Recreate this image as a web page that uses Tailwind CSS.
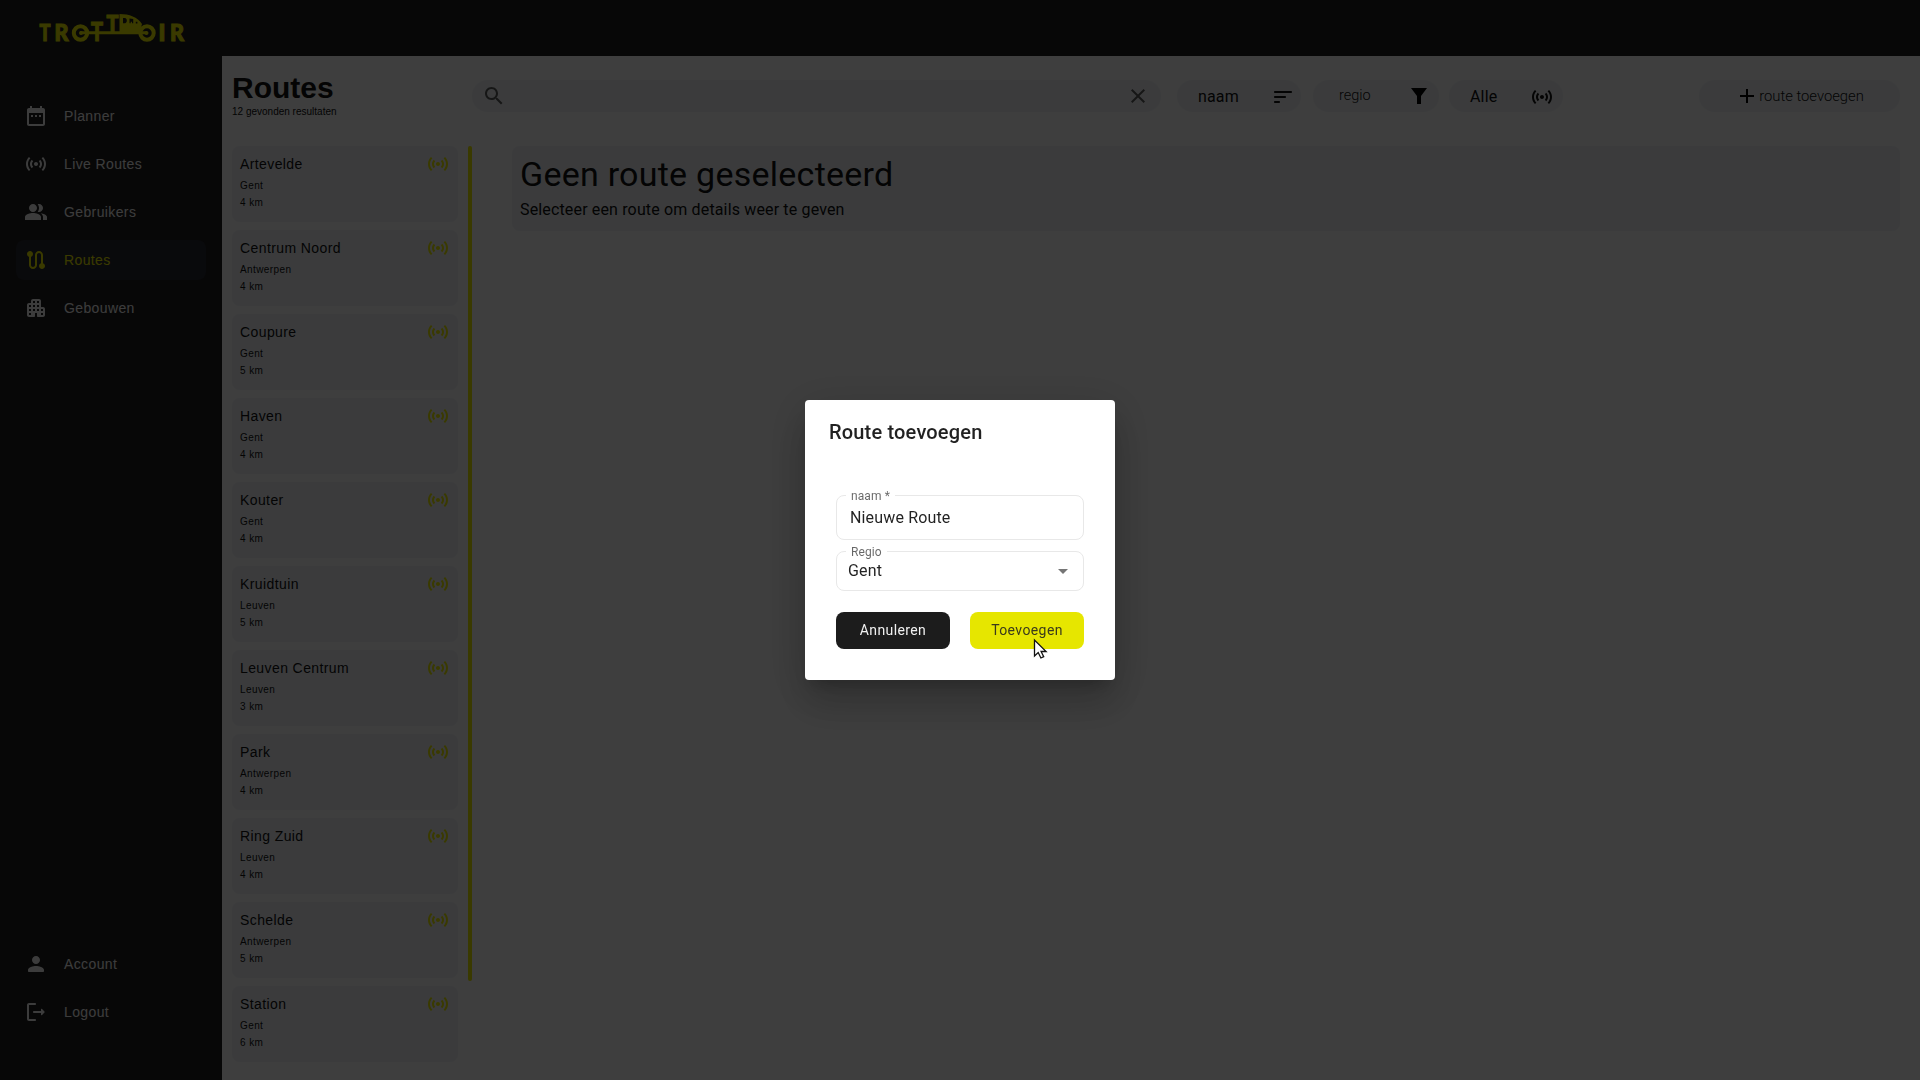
<!DOCTYPE html>
<html lang="nl">
<head>
<meta charset="utf-8">
<title>Trottoir - Routes</title>
<script src="https://cdn.jsdelivr.net/npm/@tailwindcss/browser@4"></script>
</head>
<body class="h-screen overflow-hidden bg-[#f5f5f5] font-['Roboto',sans-serif] text-[#101010]">
<svg class="hidden">
  <symbol id="live" viewBox="0 0 24 24"><path d="M7.76 16.24C6.67 15.16 6 13.66 6 12s.67-3.16 1.76-4.24l1.42 1.42C8.45 9.9 8 10.9 8 12c0 1.1.45 2.1 1.17 2.83l-1.41 1.41zm8.48 0C17.33 15.16 18 13.66 18 12s-.67-3.16-1.76-4.24l-1.42 1.42C15.55 9.9 16 10.9 16 12c0 1.1-.45 2.1-1.17 2.83l1.41 1.41zM12 10c-1.1 0-2 .9-2 2s.9 2 2 2 2-.9 2-2-.9-2-2-2zm8 2c0 2.21-.9 4.21-2.35 5.65l1.42 1.42C20.88 17.26 22 14.76 22 12s-1.12-5.26-2.93-7.07l-1.42 1.42C19.1 7.79 20 9.79 20 12zM6.35 6.35 4.93 4.93C3.12 6.74 2 9.24 2 12s1.12 5.26 2.93 7.07l1.42-1.42C4.9 16.21 4 14.21 4 12s.9-4.21 2.35-5.65z"/></symbol>
</svg>

<div class="flex h-screen flex-col">
  <header class="flex h-14 shrink-0 items-start bg-[#1c1c1c] pl-9">
    <svg class="h-14 w-40 fill-[#e6e600]" viewBox="36 0 160 56" font-family="Lato, sans-serif" font-weight="900">
      <g stroke="#e6e600" stroke-width="1.1">
        <text x="39.500" y="41" font-size="23" textLength="11" lengthAdjust="spacingAndGlyphs">T</text>
        <text x="54.500" y="41" font-size="23" textLength="14" lengthAdjust="spacingAndGlyphs">R</text>
        <text x="91" y="41" font-size="27" textLength="12" lengthAdjust="spacingAndGlyphs">T</text>
        <text x="106.500" y="32.500" font-size="24" textLength="12" lengthAdjust="spacingAndGlyphs">T</text>
        <text x="158.500" y="41" font-size="23">I</text>
        <text x="170" y="41" font-size="23" textLength="14" lengthAdjust="spacingAndGlyphs">R</text>
      </g>
      <circle cx="80.500" cy="33" r="6.700" fill="none" stroke="#e6e600" stroke-width="4"/>
      <circle cx="81" cy="33" r="2"/>
      <path d="M80 31.300h67v3H80z"/>
      <path fill-rule="evenodd" d="M119.500 14c10 0 18 3 22.500 10l-3 10h-19.500zM123 18v5.300h2.200c2.200-1 2.200-4.300 0-5.300zM129.500 18.500v4.800h1.200v-1.500h1.300v1.500h1.200v-4.300zM135.800 21.800v1.600h1.600v-1.600z"/>
      <circle cx="147" cy="33" r="6.700" fill="none" stroke="#e6e600" stroke-width="4"/>
      <circle cx="146.500" cy="33" r="2"/>
    </svg>
  </header>

  <div class="flex min-h-0 flex-1">
    <nav class="flex w-[222px] shrink-0 flex-col gap-2 bg-[#1c1c1c] px-4 pt-10 pb-12 font-['Liberation_Sans',sans-serif] text-sm tracking-[.38px] text-[#f0f0f0]">
      <a class="flex h-10 items-center gap-4 rounded-lg px-2"><svg class="size-6 fill-current" viewBox="0 0 24 24"><path d="M9 11H7v2h2v-2zm4 0h-2v2h2v-2zm4 0h-2v2h2v-2zm2-7h-1V2h-2v2H8V2H6v2H5c-1.110 0-1.990.9-1.990 2L3 20c0 1.100.89 2 2 2h14c1.100 0 2-.9 2-2V6c0-1.100-.9-2-2-2zm0 16H5V9h14v11z"/></svg>Planner</a>
      <a class="flex h-10 items-center gap-4 rounded-lg px-2"><svg class="size-6 fill-current"><use href="#live"/></svg>Live Routes</a>
      <a class="flex h-10 items-center gap-4 rounded-lg px-2"><svg class="size-6 fill-current" viewBox="0 0 24 24"><path d="M16.670 13.130C18.040 14.060 19 15.320 19 17v3h4v-3c0-2.180-3.570-3.470-6.330-3.870zM15 12c2.210 0 4-1.790 4-4s-1.790-4-4-4c-.47 0-.91.1-1.330.24C14.500 5.270 15 6.580 15 8s-.5 2.730-1.330 3.760c.42.14.86.24 1.330.24zM9 12c2.210 0 4-1.790 4-4s-1.790-4-4-4-4 1.790-4 4 1.790 4 4 4zm0 1c-2.670 0-8 1.340-8 4v3h16v-3c0-2.660-5.330-4-8-4z"/></svg>Gebruikers</a>
      <a class="flex h-10 items-center gap-4 rounded-lg bg-[#262830] px-2 text-[#e6e600]"><svg class="size-6 fill-current" viewBox="0 0 24 24"><path d="M19 15.180V7c0-2.210-1.790-4-4-4s-4 1.790-4 4v10c0 1.100-.9 2-2 2s-2-.9-2-2V8.820C8.160 8.400 9 7.300 9 6c0-1.660-1.340-3-3-3S3 4.340 3 6c0 1.300.84 2.400 2 2.820V17c0 2.210 1.790 4 4 4s4-1.790 4-4V7c0-1.100.9-2 2-2s2 .9 2 2v8.180c-1.160.41-2 1.510-2 2.820 0 1.660 1.340 3 3 3s3-1.340 3-3c0-1.300-.84-2.400-2-2.820z"/></svg>Routes</a>
      <a class="flex h-10 items-center gap-4 rounded-lg px-2"><svg class="size-6 fill-current" viewBox="0 0 24 24"><path d="M17 11V5c0-1.100-.9-2-2-2H9c-1.100 0-2 .9-2 2v2H5c-1.100 0-2 .9-2 2v10c0 1.100.9 2 2 2h5c.55 0 1-.45 1-1v-3h2v3c0 .55.45 1 1 1h5c1.100 0 2-.9 2-2v-6c0-1.100-.9-2-2-2h-2zM7 19H5v-2h2v2zm0-4H5v-2h2v2zm0-4H5V9h2v2zm4 4H9v-2h2v2zm0-4H9V9h2v2zm0-4H9V5h2v2zm4 8h-2v-2h2v2zm0-4h-2V9h2v2zm0-4h-2V5h2v2zm4 12h-2v-2h2v2zm0-4h-2v-2h2v2z"/></svg>Gebouwen</a>
      <a class="mt-auto flex h-10 items-center gap-4 rounded-lg px-2"><svg class="size-6 fill-current" viewBox="0 0 24 24"><path d="M12 12c2.210 0 4-1.790 4-4s-1.790-4-4-4-4 1.790-4 4 1.790 4 4 4zm0 2c-2.670 0-8 1.340-8 4v1c0 .55.45 1 1 1h14c.55 0 1-.45 1-1v-1c0-2.660-5.330-4-8-4z"/></svg>Account</a>
      <a class="flex h-10 items-center gap-4 rounded-lg px-2"><svg class="size-6 fill-current" viewBox="0 0 24 24"><path d="M5 5h6c.55 0 1-.45 1-1s-.45-1-1-1H5c-1.100 0-2 .9-2 2v14c0 1.100.9 2 2 2h6c.55 0 1-.45 1-1s-.45-1-1-1H5V5zm15.650 6.650-2.790-2.790c-.32-.32-.86-.1-.86.35V11h-7c-.55 0-1 .45-1 1s.45 1 1 1h7v1.790c0 .45.54.67.85.35l2.790-2.790c.2-.19.2-.51.010-.7z"/></svg>Logout</a>
    </nav>

    <main class="flex min-w-0 flex-1 flex-col pl-2.5 pr-5 pt-4">
      <div class="flex h-[74px] shrink-0 items-start">
        <div class="w-[240px] shrink-0 font-['Liberation_Sans',sans-serif]">
          <h1 class="text-[30px]/[32px] font-bold">Routes</h1>
          <p class="text-[10px]/[15px]">12 gevonden resultaten</p>
        </div>
        <div class="mt-2 flex h-8 flex-1 items-center text-base">
          <div class="flex h-8 w-[689px] items-center justify-between rounded-full bg-[#e9ecf0] pl-2.5 pr-[11px] text-[#5a5a5a]">
            <svg class="size-6 fill-current" viewBox="0 0 24 24"><path d="M15.500 14h-.79l-.28-.27C15.410 12.590 16 11.110 16 9.500 16 5.910 13.090 3 9.500 3S3 5.910 3 9.500 5.910 16 9.500 16c1.610 0 3.090-.59 4.230-1.570l.27.28v.79l5 4.990L20.490 19l-4.990-5zm-6 0C7.010 14 5 11.990 5 9.500S7.010 5 9.500 5 14 7.010 14 9.500 11.990 14 9.500 14z"/></svg>
            <svg class="size-6 fill-current" viewBox="0 0 24 24"><path d="M19 6.410 17.590 5 12 10.590 6.410 5 5 6.410 10.590 12 5 17.590 6.410 19 12 13.410 17.590 19 19 17.590 13.410 12z"/></svg>
          </div>
          <div class="ml-4 flex h-8 w-[124px] items-center justify-between rounded-full bg-[#e9ecf0] pl-[21px] pr-1.5 pt-px tracking-[.15px]">naam
            <svg class="size-6 fill-current" viewBox="0 0 24 24"><path d="M4 18h4c.55 0 1-.45 1-1s-.45-1-1-1H4c-.55 0-1 .45-1 1s.45 1 1 1zM3 7c0 .55.45 1 1 1h16c.55 0 1-.45 1-1s-.45-1-1-1H4c-.55 0-1 .45-1 1zm1 6h10c.55 0 1-.45 1-1s-.45-1-1-1H4c-.55 0-1 .45-1 1s.45 1 1 1z"/></svg>
          </div>
          <div class="ml-3 flex h-8 w-[126px] items-center justify-between rounded-full bg-[#e9ecf0] pl-[26px] pr-2 text-[14.5px] font-light">regio
            <svg class="size-6 fill-black" viewBox="0 0 24 24"><path d="M4 4h16l-6 8v8h-4v-8z"/></svg>
          </div>
          <div class="ml-2.5 flex h-8 w-[114px] items-center justify-between rounded-full bg-[#e9ecf0] pl-[21px] pr-[9px] pt-px tracking-[.15px]">Alle
            <svg class="size-6 fill-current"><use href="#live"/></svg>
          </div>
          <button class="ml-auto flex h-8 w-[201px] items-center justify-center rounded-full bg-[#e9ecf0] text-[14.8px] font-light"><svg class="size-6 fill-black" viewBox="0 0 24 24"><path d="M19 13h-6v6h-2v-6H5v-2h6V5h2v6h6v2z"/></svg>route toevoegen</button>
        </div>
      </div>

      <div class="flex min-h-0 flex-1">
        <section id="routes" class="flex w-[226px] shrink-0 flex-col gap-2 font-['Liberation_Sans',sans-serif]"></section>
        <div class="ml-2.5 h-[835px] w-1 shrink-0 rounded-full bg-[#e6e600]"></div>
        <section class="ml-10 h-[85px] flex-1 rounded-lg bg-[#e9ecf0] px-2 pt-[7px]">
          <h2 class="text-[34px]/[42px] tracking-[.25px]">Geen route geselecteerd</h2>
          <p class="mt-px text-base/7 tracking-[.15px]">Selecteer een route om details weer te geven</p>
        </section>
      </div>
    </main>
  </div>
</div>

<div class="fixed inset-0 flex items-center justify-center bg-black/75">
  <div role="dialog" class="relative h-[280px] w-[310px] rounded bg-white pt-4 shadow-[0_11px_15px_-7px_rgba(0,0,0,.2),0_24px_38px_3px_rgba(0,0,0,.14),0_9px_46px_8px_rgba(0,0,0,.12)]">
    <h2 class="px-6 text-xl/8 font-medium tracking-[.18px] text-black/87">Route toevoegen</h2>
    <div class="mt-[39px] flex flex-col px-[31px] text-base text-black/87">
      <fieldset class="-mt-px h-[54px] rounded-lg border border-[#e8e8e8] px-[9px]">
        <legend class="px-[5px] text-xs/[18px] tracking-[.1px] text-black/60"><span class="relative top-px">naam *</span></legend>
        <div class="px-1 pt-0.5 tracking-[.15px]">Nieuwe Route</div>
      </fieldset>
      <fieldset class="mt-0.5 h-[49px] rounded-lg border border-[#e8e8e8] px-[9px]">
        <legend class="px-[5px] text-xs/[18px] tracking-[.1px] text-black/60"><span class="relative top-px">Regio</span></legend>
        <div class="-mt-px flex items-center justify-between pl-0.5 tracking-[.15px]">Gent<svg class="-mr-px size-6 fill-black/54" viewBox="0 0 24 24"><path d="M7 10l5 5 5-5z"/></svg></div>
      </fieldset>
      <div class="mt-[21px] flex justify-between text-sm tracking-[.4px]">
        <button class="h-[37px] w-[114px] rounded-lg bg-[#1c1c1c] pb-0.5 text-[#f0f0f0]">Annuleren</button>
        <button class="h-[37px] w-[114px] rounded-lg bg-[#e6e600] pb-0.5 text-[#3a3a1c]">Toevoegen</button>
      </div>
    </div>
    <svg class="absolute left-[228px] top-[238px] h-[22px] w-[15px]" viewBox="0 0 15 22"><path d="M1.500 2v16l3.700-3.500 2.700 5.500 2.800-1.300-2.600-5.200h5z" fill="#fff" stroke="#111" stroke-width="1.300"/></svg>
  </div>
</div>

<script>
  const routes = [
    ['Artevelde', 'Gent', 4], ['Centrum Noord', 'Antwerpen', 4], ['Coupure', 'Gent', 5],
    ['Haven', 'Gent', 4], ['Kouter', 'Gent', 4], ['Kruidtuin', 'Leuven', 5],
    ['Leuven Centrum', 'Leuven', 3], ['Park', 'Antwerpen', 4], ['Ring Zuid', 'Leuven', 4],
    ['Schelde', 'Antwerpen', 5], ['Station', 'Gent', 6]
  ];
  document.getElementById('routes').innerHTML = routes.map(([name, region, km]) => `
    <article class="h-[76px] shrink-0 rounded-lg bg-[#e9ecf0] px-2 pt-2">
      <div class="flex h-5 items-center justify-between text-sm tracking-[.4px]">${name}<svg class="size-6 fill-[#e6e600]"><use href="#live"/></svg></div>
      <p class="mt-[3px] text-[10px]/[17px] tracking-[.4px]">${region}</p>
      <p class="text-[10px]/[17px] tracking-[.4px]">${km} km</p>
    </article>`).join('');
</script>
</body>
</html>
